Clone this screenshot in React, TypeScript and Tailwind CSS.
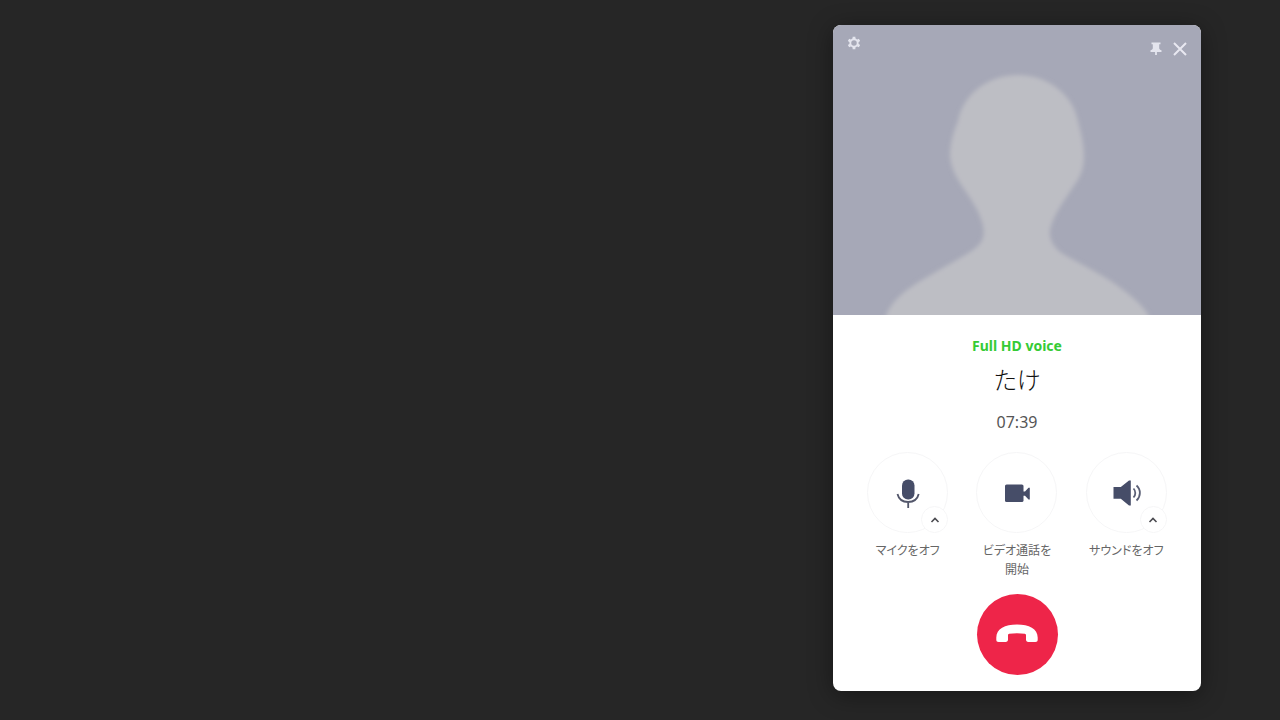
import type {ReactNode} from 'react'

type CallControlProps = Readonly<{
    label: string
    icon: ReactNode
    menuLabel?: string
}>

function GearIcon() {
    return (
        <svg viewBox="0 0 16 16" className="size-4" fill="none" stroke="#e4e5ee" aria-hidden="true">
            <circle cx="8" cy="8" r="3.700" strokeWidth="1.900" />
            <path
                d="M8 1.700v2.300M8 12v2.300M2.500 4.850l2 1.150M11.500 10l2 1.150M2.500 11.150l2-1.150M11.500 6l2-1.150"
                strokeWidth="2.800"
            />
        </svg>
    )
}

function PinIcon() {
    return (
        <svg viewBox="0 0 16 16" className="size-4" fill="#e4e5ee" aria-hidden="true">
            <path d="M3.500 1.500h9v1.700h-1.300v4c.2 1.200 1 1.700 2.300 2.100v1.700H8.900V14h-1.800v-3H2.500V9.300c1.300-.4 2.100-.9 2.300-2.100v-4H3.500z" />
        </svg>
    )
}

function CloseIcon() {
    return (
        <svg viewBox="0 0 16 16" className="size-4" fill="none" stroke="#e8e8f0" aria-hidden="true">
            <path d="M2 2l12 12M14 2L2 14" strokeWidth="2" />
        </svg>
    )
}

function MicIcon() {
    return (
        <svg viewBox="0 0 32 32" className="size-8" fill="none" aria-hidden="true">
            <rect x="10" y="2.500" width="12.500" height="20" rx="6" fill="#464d68" />
            <path d="M5.500 17c1.200 5 5.200 8 10.600 8s9.400-3 10.600-8M16.200 25.500V31" stroke="#52566a" strokeWidth="1.800" />
        </svg>
    )
}

function VideoIcon() {
    return (
        <svg viewBox="0 0 32 32" className="size-8" fill="#464d68" aria-hidden="true">
            <rect x="4" y="7.500" width="18.500" height="17.500" rx="1.600" />
            <path d="M22 14.500h2l3.500-3.700h1.300v11.700h-1.300L24 18.800H22z" />
        </svg>
    )
}

function SpeakerIcon() {
    return (
        <svg viewBox="0 0 32 32" className="size-8" fill="none" aria-hidden="true">
            <path d="M3.500 10h7.300L19 3.400h1.800v25.200H19l-8.200-6.800H3.500z" fill="#464d68" />
            <path
                d="M23.500 11.500c2.400 2.500 2.400 6.500 0 9M26.500 8.500c4.500 4 4.500 11 0 15"
                stroke="#5a5f75"
                strokeWidth="1.800"
            />
        </svg>
    )
}

function HangUpIcon() {
    return (
        <svg viewBox="0 0 44 24" className="h-6 w-11" fill="#fff" aria-hidden="true">
            <path d="M1.300 14.500C1.300 6 10 1.600 22 1.600S42.700 6 42.700 14.500v2.300c0 1.500-.8 2.200-2.300 2.200h-7c-1.600 0-2.400-.8-2.400-2.400v-4.300c0-.9-.4-1.300-1.200-1.500-4.800-.9-10.800-.9-15.600 0-.8.2-1.200.6-1.200 1.500v4.300c0 1.600-.8 2.400-2.400 2.400h-7c-1.500 0-2.300-.7-2.300-2.200z" />
        </svg>
    )
}

function Avatar() {
    return (
        <svg
            viewBox="0 0 368 290"
            preserveAspectRatio="xMidYMax slice"
            className="block size-full"
            role="img"
            aria-label="たけ"
        >
            <defs>
                <filter id="avatar-soft">
                    <feGaussianBlur stdDeviation="2" />
                </filter>
            </defs>
            <path
                d="M185 50C154 50 130 70 125 96C120 108 117 119 117 131C118 144 124 153 129 161C138 174 147 187 150 201C152 211 150 218 140 225C118 240 86 254 68 270C60 277 55 284 51 296H318C314 284 304 276 293 267C272 250 247 239 230 229C220 222 216 214 217 205C220 190 233 173 242 159C248 151 251 142 251 131C251 119 248 108 245 96C240 70 215 50 185 50Z"
                fill="#bdbec4"
                filter="url(#avatar-soft)"
            />
        </svg>
    )
}

function CallControl({label, icon, menuLabel}: CallControlProps) {
    return (
        <div className="flex flex-col items-center">
            <div className="relative">
                <button
                    type="button"
                    aria-label={label}
                    className="flex size-[81px] items-center justify-center rounded-full border border-[#f6f6f7] bg-white"
                >
                    {icon}
                </button>
                {menuLabel && (
                    <button
                        type="button"
                        aria-label={menuLabel}
                        className="absolute right-0 bottom-0 flex size-[27px] items-center justify-center rounded-full border border-[#f6f6f7] bg-white"
                    >
                        <svg viewBox="0 0 10 10" className="size-[10px]" fill="none" aria-hidden="true">
                            <path d="M1.500 7L5 3.500 8.500 7" stroke="#4b4b50" strokeWidth="1.600" />
                        </svg>
                    </button>
                )}
            </div>
            <p className="mt-2 w-20 text-center text-[12px] leading-[19px] text-[#666]">{label}</p>
        </div>
    )
}

export default function App() {
    return (
        <main className="flex min-h-screen items-start justify-end bg-[#262626] pt-[25px] pr-[79px] font-['Noto_Sans','Noto_Sans_CJK_JP',sans-serif]">
            <section className="w-full max-w-[368px] overflow-hidden rounded-lg bg-white shadow-[0_4px_24px_rgba(0,0,0,0.4)]">
                <div className="relative h-[290px] bg-[#a6a8b7]">
                    <Avatar />
                    <div className="absolute inset-x-0 top-0 flex items-start justify-between px-[13px]">
                        <button type="button" aria-label="設定" className="pt-[10px]">
                            <GearIcon />
                        </button>
                        <div className="flex gap-2 pt-4">
                            <button type="button" aria-label="固定">
                                <PinIcon />
                            </button>
                            <button type="button" aria-label="閉じる">
                                <CloseIcon />
                            </button>
                        </div>
                    </div>
                </div>

                <div className="flex flex-col items-center px-5 pt-[19px] pb-4 [font-feature-settings:'palt']">
                    <p className="text-[14px] leading-6 font-bold text-[#35cb35]">Full HD voice</p>
                    <h1 className="text-[24px] leading-[44px] font-light text-[#111]">たけ</h1>
                    <p className="mt-[6px] text-[16px] leading-7 text-[#555]">07:39</p>

                    <div className="mt-4 grid w-full grid-cols-3">
                        <CallControl label="マイクをオフ" icon={<MicIcon />} menuLabel="マイクの設定" />
                        <CallControl label="ビデオ通話を開始" icon={<VideoIcon />} />
                        <CallControl label="サウンドをオフ" icon={<SpeakerIcon />} menuLabel="サウンドの設定" />
                    </div>

                    <button
                        type="button"
                        aria-label="通話を終了"
                        className="mt-[15px] flex size-[81px] items-center justify-center rounded-full bg-[#ee2549]"
                    >
                        <HangUpIcon />
                    </button>
                </div>
            </section>
        </main>
    )
}
